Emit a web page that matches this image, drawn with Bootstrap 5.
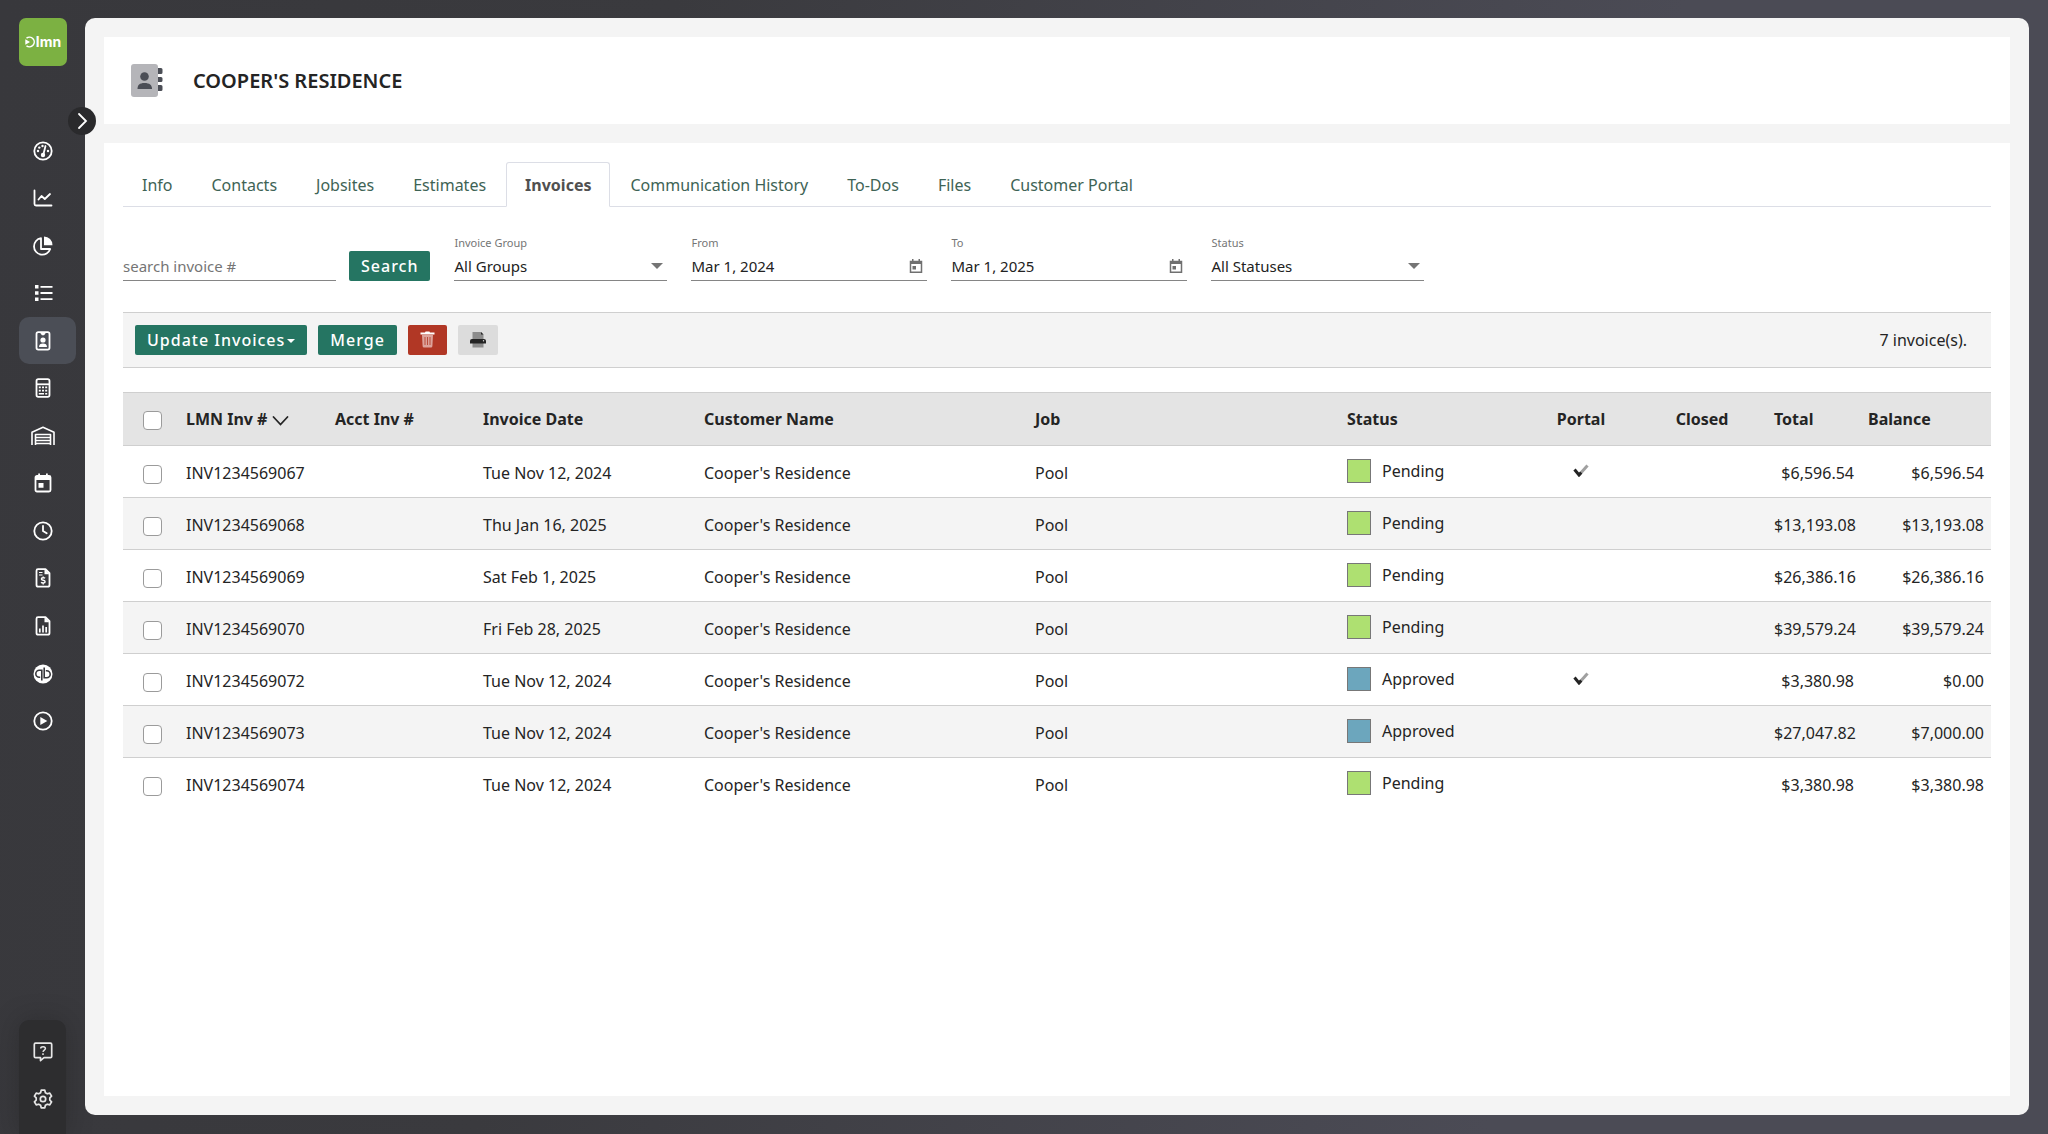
<!DOCTYPE html>
<html lang="en">
<head>
<meta charset="utf-8">
<meta name="viewport" content="width=device-width, initial-scale=1">
<title>Cooper's Residence - Invoices</title>
<link href="https://cdn.jsdelivr.net/npm/bootstrap@5.3.0/dist/css/bootstrap.min.css" rel="stylesheet">
<style>
  :root { --brand: #257562; --ink: #242424; --line: #cfcfcf; --soft: #f4f4f4; }
  body { font-family: "Noto Sans", "Open Sans", sans-serif; font-size: 16px; line-height: 24px; color: var(--ink);
    background: linear-gradient(100deg, #38383c 0%, #3a3a3e 30%, #4b4b55 75%, #4b4b55 100%); }
  .shell { min-height: 100vh; }
  .side { width: 85px; padding: 18px 9px 0 19px; }
  .brand-tile { width: 48px; height: 48px; border-radius: 7px; background: #7cb142; color: #fff; text-decoration: none;
    font: 700 14px/20px Inter, sans-serif; }
  .side-nav { margin-top: 61px; height: 617px; }
  .side-link { height: 47px; width: 57px; padding-left: 12px; border-radius: 10px; color: #fff; }
  .side-link.active { background: #4b4e56; }
  .side-link svg, .side-foot svg { display: block; }
  .side-foot { width: 47px; height: 114px; border-radius: 10px 10px 0 0; background: #2d2d2f; color: #e6e6e6; padding: 20px 0 23px; box-shadow: 0 0 24px rgba(30, 30, 30, .35); }
  .side-foot a { color: inherit; }
  .workspace { min-width: 0; margin: 18px 19px 19px 0; padding: 19px; border-radius: 10px; background: var(--soft); position: relative; gap: 19px; }
  .side-toggle { position: absolute; left: -17px; top: 89px; width: 28px; height: 28px; border: 0; border-radius: 50%; background: #2a2a2c; color: #fff; }
  .title-bar { background: #fff; height: 87px; padding: 0 27px; gap: 29px; }
  .title-bar h1 { font-size: 20px; line-height: 28px; font-weight: 600; margin: 0; text-transform: uppercase; }
  .content-card { background: #fff; padding: 19px; }
  .nav-tabs { --bs-nav-tabs-border-color: #dcdee6; --bs-nav-tabs-link-active-border-color: #dcdee6 #dcdee6 #fff; --bs-nav-tabs-border-radius: 3px; gap: 1px; }
  .nav-tabs .nav-link { color: #3e6355; padding: 10px 18px 9px; }
  .nav-tabs .nav-link.active { color: #505050; font-weight: 700; }
  .filters { padding: 28px 0 0; gap: 24px; font-size: 15px; line-height: 22px; }
  .search-group { gap: 13px; }
  .field { width: 213px; }
  .field-date { width: 236px; }
  .field label { display: block; font-size: 11px; line-height: 16px; color: #757575; height: 16px; }
  .field-line { border-bottom: 1px solid #858585; height: 30px; }
  .field input, .field select { border: 0; border-radius: 0; background-color: transparent; padding: 0; font-size: 15px; line-height: 22px; color: #222; width: 100%; height: 26px; outline-offset: 2px; }
  .field input::placeholder { color: #757575; opacity: 1; }
  .field select { appearance: none; }
  .caret-mark { border: 6px solid transparent; border-top-color: #757575; border-bottom: 0; margin-right: 4px; pointer-events: none; }
  .icon-btn { border: 0; background: none; padding: 0; color: #707070; margin-right: 3px; }
  .tool { height: 30px; border: 0; border-radius: 2px; padding: 0 12px; font-size: 16px; font-weight: 500; line-height: 30px; letter-spacing: 1px; color: #fff; background: var(--brand); }
  .tool:hover { color: #fff; background: #1c5d4e; }
  .tool-del { background: #b13725; padding: 0; width: 39px; }
  .tool-print { background: #dcdcdc; padding: 0; width: 40px; }
  .tool.dropdown-toggle::after { margin-left: 2px; vertical-align: 3px; border-width: 4px 4px 0; }
  .toolbar { margin-top: 31px; height: 56px; background: var(--soft); border-top: 1px solid var(--line); border-bottom: 1px solid var(--line); padding: 0 24px 0 12px; gap: 11px; }
  .inv-table { margin: 0; table-layout: fixed; color: var(--ink); --bs-table-color: var(--ink); }
  .inv-table > thead > tr > th, .inv-table > tbody > tr > td { height: 52px; padding: 0 7px; vertical-align: middle; white-space: nowrap; border-bottom: 1px solid var(--line); }
  .inv-table > thead > tr > th { background: #e4e4e4; border-top: 1px solid var(--line); height: 53px; font-weight: 700; }
  .inv-table > tbody > tr > td { padding-top: 2px; }
  .inv-table > tbody > tr > td.cell-mid { padding-top: 0; padding-bottom: 2px; }
  .inv-table > tbody > tr:nth-child(even) > td { background: var(--soft); }
  .inv-table > tbody > tr:last-child > td { border-bottom: 0; }
  .inv-table .form-check-input { display: block; width: 19px; height: 19px; margin: 3px 0 0 13px; border: 1px solid #9b9b9b; border-radius: 4px; }
  .swatch { width: 24px; height: 24px; border: 1px solid #777; margin-right: 11px; background: #aee071; }
  .swatch-ok { background: #6ca6bd; }
  .c-check { width: 56px; } .c-inv { width: 149px; } .c-acct { width: 148px; } .c-date { width: 221px; } .c-cust { width: 331px; }
  .c-job { width: 312px; } .c-status { width: 185px; } .c-portal { width: 112px; } .c-closed { width: 130px; } .c-total { width: 94px; } .c-bal { width: 130px; }
</style>
<script src="https://cdn.jsdelivr.net/npm/bootstrap@5.3.0/dist/js/bootstrap.bundle.min.js"></script>
</head>
<body>
<div class="shell d-flex">
  <aside class="side d-flex flex-column flex-shrink-0">
    <a class="brand-tile d-flex align-items-center justify-content-center" href="#" aria-label="LMN home">
      <svg width="11" height="12" viewBox="0 0 11 12" fill="none" stroke="#fff" stroke-width="1.500"><path d="M1.500 2.200A4.800 4.800 0 1 1 1.500 9.800"/><path d="M.3 3.200v5.600L5 6z" fill="#fff" stroke="none"/></svg><span>lmn</span>
    </a>
    <nav class="side-nav d-flex flex-column justify-content-between" aria-label="Main">
      <a class="side-link d-flex align-items-center" href="#" aria-label="Dashboard"><svg width="24" height="24" viewBox="0 0 24 24" fill="none" stroke="currentColor" stroke-width="1.800"><circle cx="12" cy="12" r="8.700"/><path d="m14.500 7-2 8" stroke-linecap="round"/><circle cx="12" cy="16" r="2.200" fill="currentColor" stroke="none"/><g fill="currentColor" stroke="none"><circle cx="7" cy="12" r="1.200"/><circle cx="8.300" cy="8.600" r="1.200"/><circle cx="11.500" cy="7" r="1.200"/><circle cx="17" cy="12" r="1.200"/></g></svg></a>
      <a class="side-link d-flex align-items-center" href="#" aria-label="Analytics"><svg width="24" height="24" viewBox="0 0 24 24" fill="none" stroke="currentColor" stroke-width="1.800" stroke-linecap="round" stroke-linejoin="round"><path d="M3.500 4.500v13.500a1.500 1.500 0 0 0 1.500 1.500h15.500M7.500 13.500l3-3.500 3.300 3L19 8"/></svg></a>
      <a class="side-link d-flex align-items-center" href="#" aria-label="Budgets"><svg width="24" height="24" viewBox="0 0 24 24" fill="none" stroke="currentColor" stroke-width="1.800" stroke-linejoin="round"><path d="M10 4.200a8.300 8.300 0 1 0 9.200 10.800H10z"/><path d="M13 2.500a8.500 8.500 0 0 1 8.500 8.700H13z" fill="currentColor" stroke="none"/></svg></a>
      <a class="side-link d-flex align-items-center" href="#" aria-label="Lists"><svg width="24" height="24" viewBox="0 0 24 24" fill="currentColor"><path d="M4 4h3.500v3.500H4zM4 10.200h3.500v3.500H4zM4 16.400h3.500v3.500H4zM9.500 4.900h12v1.800h-12zM9.500 11.100h12v1.800h-12zM9.500 17.300h12v1.800h-12z"/></svg></a>
      <a class="side-link active d-flex align-items-center" href="#" aria-current="page" aria-label="Customers"><svg width="24" height="24" viewBox="0 0 24 24" fill="none" stroke="currentColor" stroke-width="1.800"><rect x="5.500" y="3.200" width="13" height="17.400" rx="1.800"/><path d="M9.500 3h5v1.500l-1.500 1.700h-2L9.500 4.500zM8 18c0-2.500 1.500-3.600 4-3.600s4 1.100 4 3.600z" fill="currentColor" stroke="none"/><circle cx="12" cy="11" r="2.600" fill="currentColor" stroke="none"/></svg></a>
      <a class="side-link d-flex align-items-center" href="#" aria-label="Estimates"><svg width="24" height="24" viewBox="0 0 24 24" fill="none" stroke="currentColor" stroke-width="1.800"><rect x="5.500" y="3.200" width="13" height="17.600" rx="1.800"/><path d="M5.500 8.300h13"/><g fill="currentColor" stroke="none"><path d="M7.800 10.500h2v1.800h-2zM11 10.500h2v1.800h-2zM14.200 10.500h2v1.800h-2zM7.800 13.800h2v1.800h-2zM11 13.800h2v1.800h-2zM14.200 13.800h2v1.800h-2zM7.800 17.100H13v1.500H7.800zM14.200 17.100h2v1.500h-2z"/></g></svg></a>
      <a class="side-link d-flex align-items-center" href="#" aria-label="Warehouse"><svg width="24" height="24" viewBox="0 0 24 24" fill="none" stroke="currentColor" stroke-width="1.600" stroke-linejoin="round"><path d="M1 21V8.200L12 3.300l11 4.900V21"/><path d="M4.500 21V10.500h15V21M5 13.500h14M5 16.500h14M5 19.500h14"/></svg></a>
      <a class="side-link d-flex align-items-center" href="#" aria-label="Schedule"><svg width="24" height="24" viewBox="0 0 24 24" fill="none" stroke="currentColor" stroke-width="1.800"><rect x="4.500" y="5" width="15" height="15.500" rx="1.500"/><path d="M4 5h16v4H4zM7.200 2.500h1.800V6H7.200zM15 2.500h1.800V6H15zM7.500 12h5v4.800h-5z" fill="currentColor" stroke="none"/></svg></a>
      <a class="side-link d-flex align-items-center" href="#" aria-label="Timesheets"><svg width="24" height="24" viewBox="0 0 24 24" fill="none" stroke="currentColor" stroke-width="1.800" stroke-linecap="round"><circle cx="12" cy="12" r="8.700"/><path d="M12 6.800V12l3.700 2.300"/></svg></a>
      <a class="side-link d-flex align-items-center" href="#" aria-label="Invoices"><svg width="24" height="24" viewBox="0 0 24 24" fill="none" stroke="currentColor" stroke-width="1.800" stroke-linejoin="round"><path d="M7 3.200h7.500l4 4V19a1.700 1.700 0 0 1-1.700 1.700H7.200A1.700 1.700 0 0 1 5.500 19V4.700A1.500 1.500 0 0 1 7 3.200z"/><path d="M13.500 3v5.200h5.200z" fill="currentColor" stroke="none"/><path d="M8 6.500h3.500M8 9h3.500" stroke-width="1.200"/><path d="M14 12.300c-.6-.7-3.600-.9-3.600.7 0 1.700 3.700.9 3.700 2.700 0 1.600-3.200 1.500-4 .5M12.200 10.500v1.400M12.200 17v1.500" stroke-width="1.400"/></svg></a>
      <a class="side-link d-flex align-items-center" href="#" aria-label="Reports"><svg width="24" height="24" viewBox="0 0 24 24" fill="none" stroke="currentColor" stroke-width="1.800" stroke-linejoin="round"><path d="M7 3.200h7.500l4 4V19a1.700 1.700 0 0 1-1.700 1.700H7.200A1.700 1.700 0 0 1 5.500 19V4.700A1.500 1.500 0 0 1 7 3.200z"/><path d="M13.500 3v5.200h5.200z" fill="currentColor" stroke="none"/><path d="M8.800 14.500v4M12 11.500v7M15.200 13v5.500" stroke-width="1.700"/></svg></a>
      <a class="side-link d-flex align-items-center" href="#" aria-label="QuickBooks"><svg width="24" height="24" viewBox="0 0 24 24" fill="none"><circle cx="12" cy="13" r="9.500" fill="#fff"/><path d="M10.800 19.500V9.300H8.300a3.500 3.500 0 0 0 0 7h.9M13.200 6.500v10.200h2.500a3.500 3.500 0 0 0 0-7h-.9" stroke="#38383c" stroke-width="1.600"/></svg></a>
      <a class="side-link d-flex align-items-center" href="#" aria-label="Videos"><svg width="24" height="24" viewBox="0 0 24 24" fill="none" stroke="currentColor" stroke-width="1.800"><circle cx="12" cy="12" r="8.700"/><path d="M9.300 8v8l7-4z" fill="currentColor" stroke="none"/></svg></a>
    </nav>
    <div class="side-foot mt-auto d-flex flex-column align-items-center justify-content-between">
      <a href="#" aria-label="Help"><svg width="24" height="24" viewBox="0 0 24 24" fill="none" stroke="currentColor" stroke-width="1.700" stroke-linejoin="round"><path d="M4.500 3.200h15a1.200 1.200 0 0 1 1.200 1.200v12a1.200 1.200 0 0 1-1.200 1.200h-6.500l-3.500 3v-3h-5a1.200 1.200 0 0 1-1.200-1.200v-12a1.200 1.200 0 0 1 1.200-1.200z"/><path d="M9.700 8.500c.2-2.200 4.700-2.200 4.700.1 0 1.500-2.300 1.500-2.400 3.300M12 13.300v1.600" stroke-width="1.500"/></svg></a>
      <a href="#" aria-label="Settings"><svg width="24" height="24" viewBox="0 0 24 24" fill="none" stroke="currentColor" stroke-width="1.700" stroke-linejoin="round"><path d="M10.200 3.200h3.600l.6 2.500 1.900 1.100 2.500-.7 1.800 3.100-1.800 1.700v2.200l1.800 1.700-1.800 3.100-2.500-.7-1.900 1.100-.6 2.500h-3.600l-.6-2.500-1.900-1.100-2.500.7-1.800-3.100 1.800-1.700v-2.200L3.400 9.200l1.800-3.100 2.500.7 1.900-1.100z"/><circle cx="12" cy="12" r="2.700"/></svg></a>
    </div>
  </aside>

  <main class="workspace d-flex flex-column flex-grow-1">
    <button class="side-toggle d-flex align-items-center justify-content-center p-0" type="button" aria-label="Expand menu"><svg width="12" height="18" viewBox="0 0 12 18" fill="none" stroke="currentColor" stroke-width="1.800" stroke-linecap="round"><path d="m3 2 7 7-7 7"/></svg></button>
    <header class="title-bar d-flex align-items-center">
      <svg width="33" height="34" viewBox="0 0 33 34" aria-hidden="true"><rect width="27" height="33" rx="3" fill="#b5b5b9"/><g fill="#4b4e56"><path d="M27 4h3a1.500 1.500 0 0 1 1.500 1.500v3A1.500 1.500 0 0 1 30 10h-3zM27 13h3a1.500 1.500 0 0 1 1.500 1.500v2A1.500 1.500 0 0 1 30 18h-3zM27 21h3a1.500 1.500 0 0 1 1.500 1.500v3A1.500 1.500 0 0 1 30 27h-3z"/><circle cx="13.500" cy="12.500" r="4.300"/><path d="M6.500 25c0-4 2-6 7-6s7.500 2 7.500 6z"/></g></svg>
      <h1>Cooper's Residence</h1>
    </header>

    <section class="content-card flex-grow-1">
      <ul class="nav nav-tabs">
        <li class="nav-item"><a class="nav-link" href="#">Info</a></li>
        <li class="nav-item"><a class="nav-link" href="#">Contacts</a></li>
        <li class="nav-item"><a class="nav-link" href="#">Jobsites</a></li>
        <li class="nav-item"><a class="nav-link" href="#">Estimates</a></li>
        <li class="nav-item"><a class="nav-link active" aria-current="page" href="#">Invoices</a></li>
        <li class="nav-item"><a class="nav-link" href="#">Communication History</a></li>
        <li class="nav-item"><a class="nav-link" href="#">To-Dos</a></li>
        <li class="nav-item"><a class="nav-link" href="#">Files</a></li>
        <li class="nav-item"><a class="nav-link" href="#">Customer Portal</a></li>
      </ul>

      <form class="filters d-flex flex-wrap align-items-end">
        <div class="search-group d-flex align-items-end">
          <div class="field"><div class="field-line d-flex align-items-center"><input type="text" aria-label="Search invoice number" placeholder="search invoice #"></div></div>
          <button class="btn tool" type="button">Search</button>
        </div>
        <div class="field"><label for="grp">Invoice Group</label><div class="field-line d-flex align-items-center"><select id="grp"><option>All Groups</option></select><span class="caret-mark"></span></div></div>
        <div class="field field-date"><label for="from">From</label><div class="field-line d-flex align-items-center"><input id="from" type="text" value="Mar 1, 2024"><button class="icon-btn" type="button" aria-label="Choose start date"><svg class="d-block" width="16" height="18" viewBox="0 0 16 18" fill="none" stroke="currentColor" stroke-width="1.500"><path d="M2.500 4.500h11v10.700h-11z"/><path d="M2 4h12v3H2zM4 2h1.500v3H4zM10.500 2H12v3h-1.500zM4.500 9h3.500v3.500H4.500z" fill="currentColor" stroke="none"/></svg></button></div></div>
        <div class="field field-date"><label for="to">To</label><div class="field-line d-flex align-items-center"><input id="to" type="text" value="Mar 1, 2025"><button class="icon-btn" type="button" aria-label="Choose end date"><svg class="d-block" width="16" height="18" viewBox="0 0 16 18" fill="none" stroke="currentColor" stroke-width="1.500"><path d="M2.500 4.500h11v10.700h-11z"/><path d="M2 4h12v3H2zM4 2h1.500v3H4zM10.500 2H12v3h-1.500zM4.500 9h3.500v3.500H4.500z" fill="currentColor" stroke="none"/></svg></button></div></div>
        <div class="field"><label for="stat">Status</label><div class="field-line d-flex align-items-center"><select id="stat"><option>All Statuses</option></select><span class="caret-mark"></span></div></div>
      </form>

      <div class="toolbar d-flex align-items-center">
        <button class="btn tool dropdown-toggle" type="button" data-bs-toggle="dropdown">Update Invoices</button>
        <button class="btn tool" type="button">Merge</button>
        <button class="btn tool tool-del d-flex align-items-center justify-content-center" type="button" aria-label="Delete"><svg width="15" height="18" viewBox="0 0 15 18"><path d="M2 4h11l-.6 11a1.500 1.500 0 0 1-1.500 1.500H4.100A1.500 1.500 0 0 1 2.600 15z" fill="#dda39b"/><path d="M5 6v8M7.500 6v8M10 6v8" stroke="#b13725" stroke-width=".8"/><path d="M.5 1.500H5l.6-1h3.800l.6 1h4.500v2H.5z" fill="#fff"/></svg></button>
        <button class="btn tool tool-print d-flex align-items-center justify-content-center" type="button" aria-label="Print"><svg width="16" height="18" viewBox="0 0 16 18"><path d="M2.500 1h8.500l2.500 2.500V8h-11zM2.500 11h11v5.500h-11z" fill="#8c8c8c"/><path d="M11 1l2.500 2.500H11z" fill="#242424"/><path d="M2 8h12a2 2 0 0 1 2 2v2.500H0V10a2 2 0 0 1 2-2z" fill="#242424"/><circle cx="13.500" cy="9.800" r=".700" fill="#ddd"/></svg></button>
        <span class="ms-auto">7 invoice(s).</span>
      </div>

      <div class="table-responsive mt-4">
      <table class="table inv-table">
        <colgroup><col class="c-check"><col class="c-inv"><col class="c-acct"><col class="c-date"><col class="c-cust"><col class="c-job"><col class="c-status"><col class="c-portal"><col class="c-closed"><col class="c-total"><col class="c-bal"></colgroup>
        <thead>
          <tr>
            <th scope="col"><input class="form-check-input" type="checkbox" aria-label="Select all invoices"></th>
            <th scope="col">LMN Inv # <svg width="17" height="11" viewBox="0 0 17 11" fill="none" stroke="currentColor" stroke-width="1.800" stroke-linecap="round"><path d="m1.500 2 7 7.500 7-7.500"/></svg></th>
            <th scope="col">Acct Inv #</th>
            <th scope="col">Invoice Date</th>
            <th scope="col">Customer Name</th>
            <th scope="col">Job</th>
            <th scope="col">Status</th>
            <th scope="col" class="text-center">Portal</th>
            <th scope="col" class="text-center">Closed</th>
            <th scope="col">Total</th>
            <th scope="col">Balance</th>
          </tr>
        </thead>
        <tbody id="rows"></tbody>
      </table>
      </div>
    </section>
  </main>
</div>
<script>
  const invoices = [
    ["INV1234569067", "Tue Nov 12, 2024", "Pending", true, "$6,596.54", "$6,596.54"],
    ["INV1234569068", "Thu Jan 16, 2025", "Pending", false, "$13,193.08", "$13,193.08"],
    ["INV1234569069", "Sat Feb 1, 2025", "Pending", false, "$26,386.16", "$26,386.16"],
    ["INV1234569070", "Fri Feb 28, 2025", "Pending", false, "$39,579.24", "$39,579.24"],
    ["INV1234569072", "Tue Nov 12, 2024", "Approved", true, "$3,380.98", "$0.00"],
    ["INV1234569073", "Tue Nov 12, 2024", "Approved", false, "$27,047.82", "$7,000.00"],
    ["INV1234569074", "Tue Nov 12, 2024", "Pending", false, "$3,380.98", "$3,380.98"]
  ];
  const tick = '<svg class="d-block mx-auto" width="16" height="13" viewBox="0 0 16 13" role="img" aria-label="On portal" fill="none" stroke-width="3"><path d="M6 11 14.500 1.500" stroke="#a0a0a0"/><path d="M1.500 5.500 6 11l2.200-2.500" stroke="#242424"/></svg>';
  document.getElementById("rows").innerHTML = invoices.map(([id, date, status, portal, total, balance]) => `
    <tr>
      <td><input class="form-check-input" type="checkbox" aria-label="Select ${id}"></td>
      <td>${id}</td><td></td><td>${date}</td><td>Cooper's Residence</td><td>Pool</td>
      <td class="cell-mid"><span class="d-flex align-items-center"><span class="swatch ${status === "Approved" ? "swatch-ok" : ""}"></span>${status}</span></td>
      <td class="cell-mid">${portal ? tick : ""}</td><td></td>
      <td class="text-end">${total}</td><td class="text-end">${balance}</td>
    </tr>`).join("");
</script>
</body>
</html>
